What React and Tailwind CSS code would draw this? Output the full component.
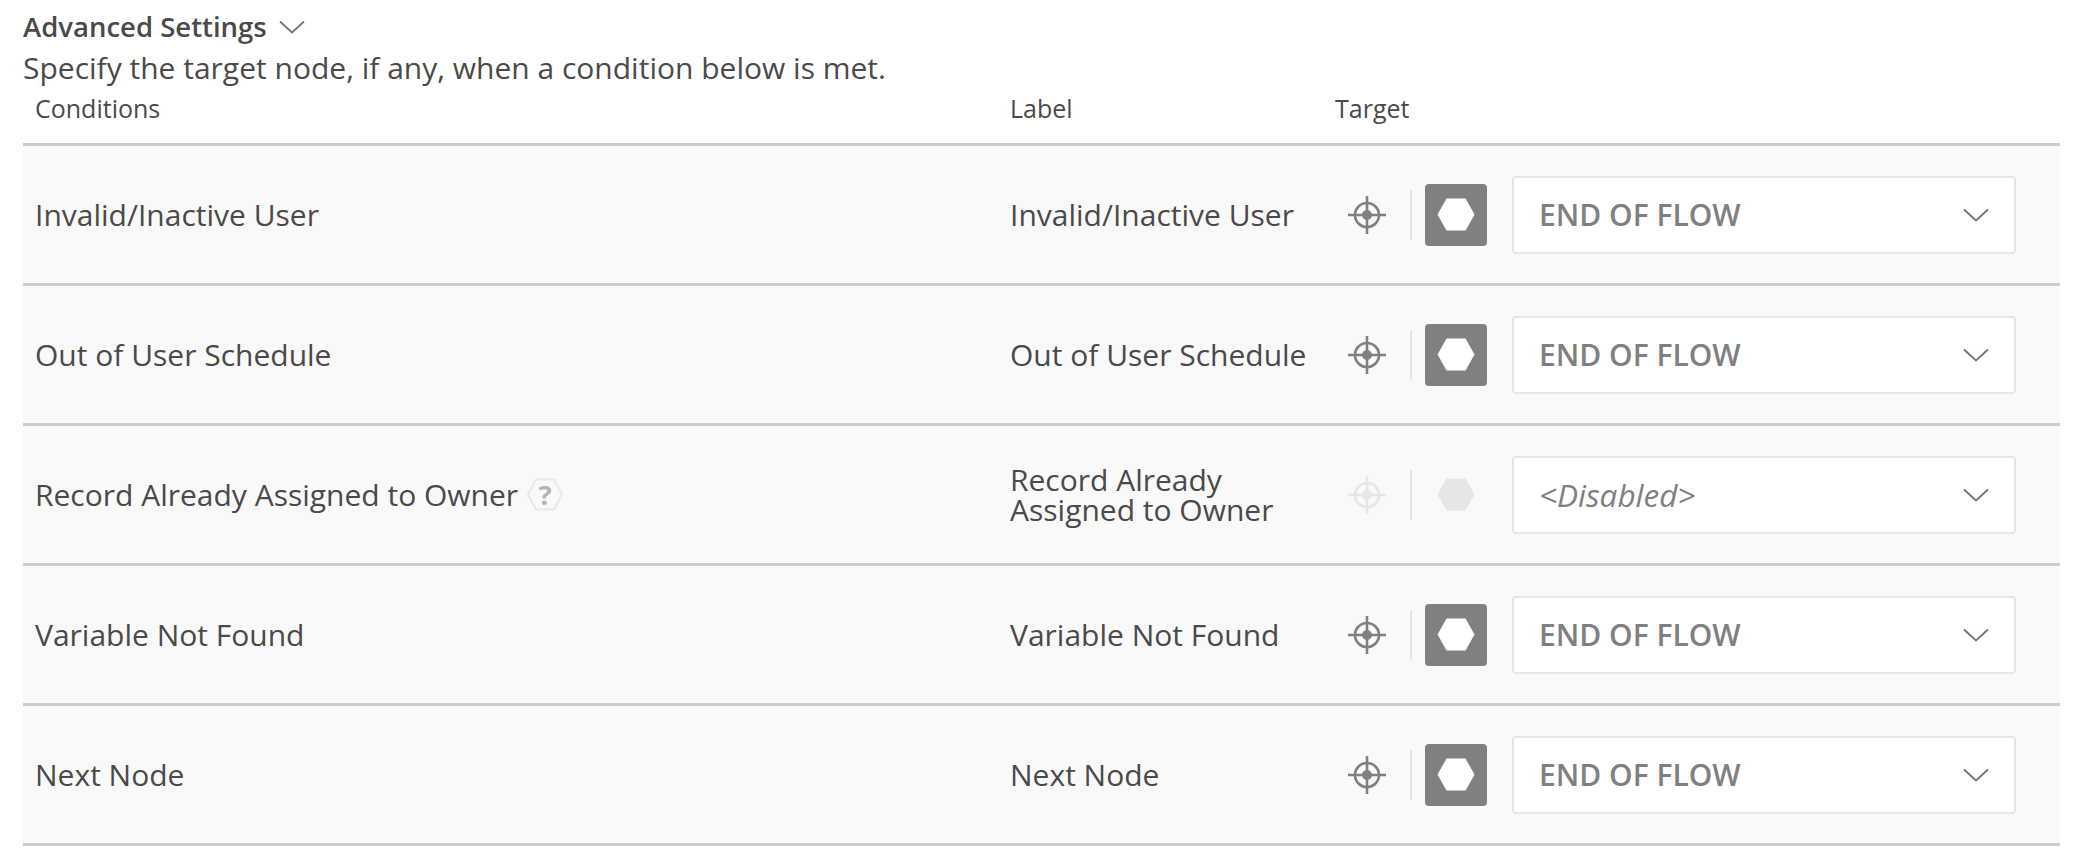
const rows = [
  { c: "Invalid/Inactive User", l: "Invalid/Inactive User" },
  { c: "Out of User Schedule", l: "Out of User Schedule" },
  { c: "Record Already Assigned to Owner", l: "Record Already Assigned to Owner", disabled: true },
  { c: "Variable Not Found", l: "Variable Not Found" },
  { c: "Next Node", l: "Next Node" },
];

function Chevron({ className }) {
  return (
    <svg viewBox="0 0 26 14" className={className} fill="none" stroke="#6b7780" strokeWidth="1.8">
      <path d="M1 1.5 L13 12.5 L25 1.5" />
    </svg>
  );
}

function Crosshair({ color }) {
  return (
    <svg width="40" height="40" viewBox="0 0 40 40" fill="none" stroke={color} strokeWidth="2.6">
      <circle cx="20" cy="20" r="12" />
      <circle cx="20" cy="20" r="5" fill={color} stroke="none" />
      <path d="M20 1 V39 M1 20 H39" />
    </svg>
  );
}

function Hex({ color }) {
  return (
    <svg width="38" height="33" viewBox="0 0 38 33">
      <polygon points="9.5,0.5 28.5,0.5 37.5,16.5 28.5,32.5 9.5,32.5 0.5,16.5" fill={color} />
    </svg>
  );
}

function Help() {
  return (
    <span className="relative ml-[9px] inline-flex h-[33px] w-[36px] items-center justify-center">
      <svg width="36" height="33" viewBox="0 0 36 33" className="absolute inset-0" fill="none" stroke="#e8e8e8" strokeWidth="2">
        <polygon points="9,1.5 27,1.5 35,16.5 27,31.5 9,31.5 1,16.5" />
      </svg>
      <span className="relative text-[27px] leading-none font-bold text-[#b3b3b3]">?</span>
    </span>
  );
}

function Row({ c, l, disabled }) {
  return (
    <div className="flex h-[140px] items-center border-b-[3px] border-[#cccccc] bg-[#f9f9f9] text-[30px] text-[#4a4a4a]">
      <div className="flex w-[987px] shrink-0 items-center pl-3">
        <span>{c}</span>
        {disabled && <Help />}
      </div>
      <div className="w-[334px] shrink-0 text-[30px] leading-[30px]">{l}</div>
      <div className="flex w-[46px] shrink-0 justify-center">
        <Crosshair color={disabled ? "#e6e6e6" : "#808080"} />
      </div>
      <div className={"ml-[20px] h-[50px] w-[2px] shrink-0 bg-[#e6e6e6]"} />
      <div className={"ml-[13px] flex h-[62px] w-[62px] shrink-0 items-center justify-center rounded-[4px] " + (disabled ? "" : "bg-[#808080]")}>
        <Hex color={disabled ? "#e6e6e6" : "#ffffff"} />
      </div>
      <div className="ml-[25px] flex h-[78px] w-[504px] shrink-0 items-center justify-between rounded-[4px] border-2 border-[#e6e6e6] bg-white pr-[25px] pl-[25px]">
        {disabled ? (
          <span className="text-[31.5px] text-[#808080] italic">&lt;Disabled&gt;</span>
        ) : (
          <span className="text-[30px] font-semibold text-[#808080]">END OF FLOW</span>
        )}
        <Chevron className="h-[14px] w-[26px]" />
      </div>
    </div>
  );
}

export default function App() {
  return (
    <div className="h-[868px] w-[2080px] bg-white pr-5 pl-[23px] font-['Open_Sans',sans-serif] text-[#4a4a4a]">
      <div className="flex h-[54px] items-center">
        <span className="text-[27.5px] font-semibold">Advanced Settings</span>
        <Chevron className="ml-[12px] h-[14px] w-[26px]" />
      </div>
      <div className="h-[37px] text-[30px] leading-[28px]">Specify the target node, if any, when a condition below is met.</div>
      <div className="flex h-[55px] items-start border-b-[3px] border-[#cccccc] text-[25px] leading-[35px]">
        <div className="w-[987px] shrink-0 pl-3">Conditions</div>
        <div className="w-[325px] shrink-0">Label</div>
        <div>Target</div>
      </div>
      {rows.map((r) => (
        <Row key={r.c} {...r} />
      ))}
    </div>
  );
}
